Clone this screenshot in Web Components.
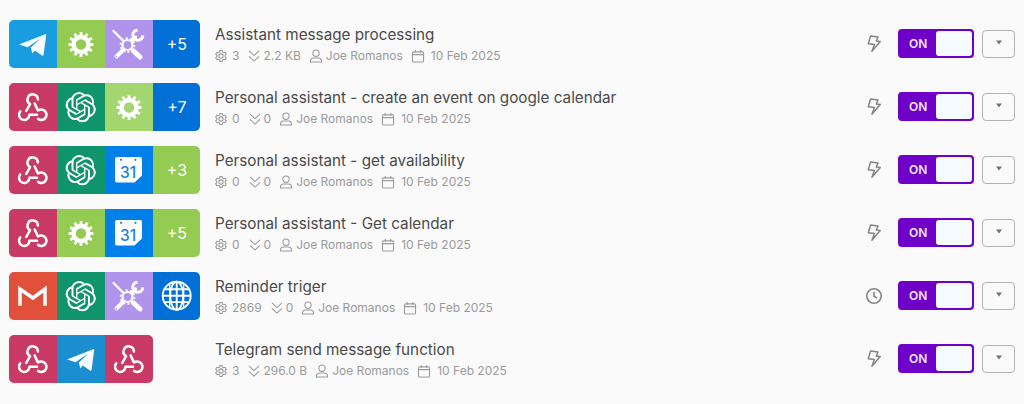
<!doctype html>
<html><head><meta charset="utf-8">
<style>
html,body{margin:0;padding:0;background:#fafafa}
body{font-family:Inter,"Liberation Sans",sans-serif}
</style></head><body>
<scenario-list>
<scenario-row name="Assistant message processing" ops="3" size="2.2 KB" trigger="bolt"><app-tile kind="telegram"></app-tile><app-tile kind="gear"></app-tile><app-tile kind="tools"></app-tile><app-tile kind="more" label="+5" bg="#006fd6"></app-tile></scenario-row>
<scenario-row name="Personal assistant - create an event on google calendar" ops="0" size="0" trigger="bolt"><app-tile kind="webhook"></app-tile><app-tile kind="openai"></app-tile><app-tile kind="gear" bg="#a3d66e"></app-tile><app-tile kind="more" label="+7" bg="#006fd6"></app-tile></scenario-row>
<scenario-row name="Personal assistant - get availability" ops="0" size="0" trigger="bolt"><app-tile kind="webhook"></app-tile><app-tile kind="openai"></app-tile><app-tile kind="gcal"></app-tile><app-tile kind="more" label="+3" bg="#94cb52"></app-tile></scenario-row>
<scenario-row name="Personal assistant - Get calendar" ops="0" size="0" trigger="bolt"><app-tile kind="webhook"></app-tile><app-tile kind="gear"></app-tile><app-tile kind="gcal"></app-tile><app-tile kind="more" label="+5" bg="#94cb52"></app-tile></scenario-row>
<scenario-row name="Reminder triger" ops="2869" size="0" trigger="clock"><app-tile kind="gmail"></app-tile><app-tile kind="openai"></app-tile><app-tile kind="tools"></app-tile><app-tile kind="globe"></app-tile></scenario-row>
<scenario-row name="Telegram send message function" ops="3" size="296.0 B" trigger="bolt"><app-tile kind="webhook"></app-tile><app-tile kind="telegram" bg="#1a8ecf"></app-tile><app-tile kind="webhook"></app-tile></scenario-row>
</scenario-list>
<script>
function gearPath(cx,cy,ro,ri,hole,teeth){
  let d='';const step=Math.PI*2/teeth;
  for(let i=0;i<teeth;i++){
    const a=i*step-Math.PI/2;
    const pts=[[ri,a-step*.5],[ri,a-step*.3],[ro,a-step*.2],[ro,a+step*.2],[ri,a+step*.3]];
    pts.forEach((p,j)=>{d+=(i===0&&j===0?'M':'L')+(cx+p[0]*Math.cos(p[1])).toFixed(2)+' '+(cy+p[0]*Math.sin(p[1])).toFixed(2)});
  }
  d+='Z M'+(cx+hole)+' '+cy+'a'+hole+' '+hole+' 0 1 0 '+(-2*hole)+' 0a'+hole+' '+hole+' 0 1 0 '+(2*hole)+' 0Z';
  return d;
}
const ICONS={
 telegram:{bg:'#1a9de0',svg:`<path fill="#f6fbff" d="M10 24.6 36.2 14.2q1.1-.3 1 1L34.6 34.8q-.3 1.4-1.6.7L25.8 30.6 23.4 33.4 21.8 27.6 31.4 18.6 18.6 27.2Z"/>`},
 gear:{bg:'#94cb52',svg:`<path fill="#fff" fill-rule="evenodd" d="${gearPath(24,24.5,12.6,9.6,5.2,12)}"/>`},
 tools:{bg:'#b094ec',svg:`<g fill="none" stroke="#fff" stroke-linecap="round">
   <path stroke-width="2.200" d="M8.5 11 18 20.5"/>
   <path stroke-width="5" d="M28.500 31 35 37"/>
   <path stroke-width="1.800" d="M26.500 30 29 32.500"/>
   <path stroke-width="4" d="M17.500 30.500 11.500 36.500"/>
   <path stroke-width="3.200" d="M27 20.500 30.500 17"/>
   <circle cx="22.5" cy="25" r="5" stroke-width="2.200"/>
   <circle cx="22.5" cy="25" r="7" stroke-width="1.600" stroke-dasharray="2.200 2.200" stroke-linecap="butt"/>
   <path stroke-width="3" stroke-linecap="butt" d="M32.500 10.200A5 5 0 1 0 37.800 15.400"/></g>
   <circle cx="11.2" cy="36.8" r=".9" fill="#b094ec"/>`},
 webhook:{bg:'#c93a67',svg:`<g fill="none" stroke="#fff" stroke-width="2.500" stroke-linecap="round" stroke-linejoin="round"><path d="M28.900 16.600A5.200 5.200 0 1 0 21.100 21.100L17.200 28"/><path d="M11.200 28.400A5.200 5.200 0 1 0 20.400 31.700H28"/><path d="M29 35.700A5.200 5.200 0 1 0 32.300 26.500Q30.400 26.500 28.900 27.400L25.700 20.500"/></g>`},
 openai:{bg:'#10946c',svg:`<g transform="translate(8.6 9) scale(1.26)"><path fill="#fff" d="M22.2819 9.8211a5.9847 5.9847 0 0 0-.5157-4.9108 6.0462 6.0462 0 0 0-6.5098-2.9A6.0651 6.0651 0 0 0 4.9807 4.1818a5.9847 5.9847 0 0 0-3.9977 2.9 6.0462 6.0462 0 0 0 .7427 7.0966 5.98 5.98 0 0 0 .511 4.9107 6.051 6.051 0 0 0 6.5146 2.9001A5.9847 5.9847 0 0 0 13.2599 24a6.0557 6.0557 0 0 0 5.7718-4.2058 5.9894 5.9894 0 0 0 3.9977-2.9001 6.0557 6.0557 0 0 0-.7475-7.0729zm-9.022 12.6081a4.4755 4.4755 0 0 1-2.8764-1.0408l.1419-.0804 4.7783-2.7582a.7948.7948 0 0 0 .3927-.6813v-6.7369l2.02 1.1686a.071.071 0 0 1 .038.052v5.5826a4.504 4.504 0 0 1-4.4945 4.4944zm-9.6607-4.1254a4.4708 4.4708 0 0 1-.5346-3.0137l.142.0852 4.783 2.7582a.7712.7712 0 0 0 .7806 0l5.8428-3.3685v2.3324a.0804.0804 0 0 1-.0332.0615L9.74 19.9502a4.4992 4.4992 0 0 1-6.1408-1.6464zM2.3408 7.8956a4.485 4.485 0 0 1 2.3655-1.9728V11.6a.7664.7664 0 0 0 .3879.6765l5.8144 3.3543-2.0201 1.1685a.0757.0757 0 0 1-.071 0l-4.8303-2.7865A4.504 4.504 0 0 1 2.3408 7.872zm16.5963 3.8558L13.1038 8.364 15.1192 7.2a.0757.0757 0 0 1 .071 0l4.8303 2.7913a4.4944 4.4944 0 0 1-.6765 8.1042v-5.6772a.79.79 0 0 0-.407-.667zm2.0107-3.0231l-.142-.0852-4.7735-2.7818a.7759.7759 0 0 0-.7854 0L9.409 9.2297V6.8974a.0662.0662 0 0 1 .0284-.0615l4.8303-2.7866a4.4992 4.4992 0 0 1 6.6802 4.66zM8.3065 12.863l-2.02-1.1638a.0804.0804 0 0 1-.038-.0567V6.0742a4.4992 4.4992 0 0 1 7.3757-3.4537l-.142.0805L8.704 5.459a.7948.7948 0 0 0-.3927.6813zm1.0976-2.3654l2.602-1.4998 2.6069 1.4998v2.9994l-2.5974 1.4997-2.6067-1.4997Z"/></g>`},
 gcal:{bg:'#0080e8',svg:`<path fill="#fff" d="M12 11h23q2 0 2 2v16.5L29.5 36.500H12q-2 0-2-2V13q0-2 2-2Z"/><circle cx="16" cy="13.8" r="1.1" fill="#0080e8"/><circle cx="30.5" cy="13.8" r="1.1" fill="#0080e8"/><text x="23.2" y="31.500" text-anchor="middle" font-family="Inter,'Liberation Sans',sans-serif" font-size="15.5" font-weight="500" fill="#1a80e0">31</text>`},
 gmail:{bg:'#e0503b',svg:`<path fill="none" stroke="#fff" stroke-width="3.500" stroke-linejoin="miter" d="M11 33.700V17L24 26 36 17V33.700"/>`},
 globe:{bg:'#006fd6',svg:`<g fill="none" stroke="#fff" stroke-width="1.9"><circle cx="23.700" cy="23.700" r="14"/><ellipse cx="23.700" cy="23.700" rx="6.500" ry="14"/><path d="M23.700 9.700V37.700M11.400 17.300H36M9.700 23.700H37.700M11.400 30.100H36"/><path d="M16.700 11.500V35.900M30.700 11.500V35.900" stroke-width="1.300"/></g>`}
};
class AppTile extends HTMLElement{
  connectedCallback(){
    const k=this.getAttribute('kind'),ic=ICONS[k],bg=this.getAttribute('bg')||(ic&&ic.bg);
    const s=this.attachShadow({mode:'open'});
    s.innerHTML=`<style>:host{display:flex;align-items:center;justify-content:center;flex:0 0 47.75px;height:48px;background:${bg};color:#fff;font:400 16px Inter,"Liberation Sans",sans-serif}svg{display:block;width:48px;height:48px;flex:none}</style>`+
      (k==='more'?`<span>${this.getAttribute('label')}</span>`:`<svg viewBox="0 0 48 48">${ic.svg}</svg>`);
  }
}
const META={
 cog:`<path d="M6.800 1.800h2.400l.4 1.700 1.200.7 1.700-.5 1.200 2-1.200 1.300v1.400l1.200 1.300-1.200 2-1.700-.5-1.200.7-.4 1.700H6.800l-.4-1.700-1.200-.7-1.700.5-1.200-2 1.200-1.300V7l-1.200-1.300 1.200-2 1.700.5 1.200-.7Z" transform="translate(0 .3)"/><circle cx="8" cy="8" r="2.300"/>`,
 chev:`<path d="M2.500 2.500 8 7.500l5.500-5M2.500 8.500 8 13.500l5.500-5"/>`,
 user:`<circle cx="8" cy="5" r="3.400"/><path d="M2 14.500v-.8a3.500 3.500 0 0 1 3.500-3.500h5a3.500 3.500 0 0 1 3.500 3.500v.8Z"/>`,
 cal:`<rect x="2" y="3.500" width="12" height="11" rx="1.200"/><path d="M2 6.500h12M5 1.500v3M11 1.500v3"/>`
};
class MetaItem extends HTMLElement{
  connectedCallback(){
    const s=this.attachShadow({mode:'open'});
    s.innerHTML=`<style>:host{display:inline-flex;align-items:center;gap:var(--g,4px)}svg{width:12px;height:12px;fill:none;stroke:#9b9b9b;stroke-width:1.150;display:block;flex:none;overflow:visible}</style><svg viewBox="1.500 1.500 13 13">${META[this.getAttribute('icon')]}</svg><slot></slot>`;
  }
}
customElements.define('meta-item',MetaItem);
class OnToggle extends HTMLElement{
  constructor(){super();const s=this.attachShadow({mode:'open'});
    s.innerHTML=`<style>:host{display:flex;box-sizing:border-box;width:76px;height:29px;background:#6f00c8;border:2px solid #6f00c8;border-radius:4px;color:#fff;font:600 12px Inter,"Liberation Sans",sans-serif}
    .l{flex:1;display:flex;align-items:center;padding-left:9px;color:#f0e6fa}.k{width:36px;background:#f6fbff;border-radius:3px}</style><div class="l">ON</div><div class="k"></div>`}
}
customElements.define('on-toggle',OnToggle);
class CaretButton extends HTMLElement{
  constructor(){super();const s=this.attachShadow({mode:'open'});
    s.innerHTML=`<style>:host{display:flex;align-items:center;justify-content:center;box-sizing:border-box;width:33px;height:28px;border:1.5px solid #b0b4b8;border-radius:4px;background:#fafafa}svg{width:8px;height:5px;display:block;margin-top:-2px}</style><svg viewBox="0 0 8 5"><path d="M1 .5h6L4 4.500Z" fill="#6b7676"/></svg>`}
}
customElements.define('caret-button',CaretButton);
class ScenarioRow extends HTMLElement{
  connectedCallback(){
    const a=n=>this.getAttribute(n);
    const bolt=`<svg width="16" height="18" viewBox="0 0 16 18" fill="none" stroke="#858585" stroke-width="1.500" stroke-linejoin="round"><path d="M3.500 1.500h7.500l-1.200 4.200h4L7 16.500l1.500-7H2.300Z" transform="rotate(8 8 9)"/></svg>`;
    const clock=`<svg width="18" height="18" viewBox="0 0 18 18" fill="none" stroke="#858585" stroke-width="1.600"><circle cx="9" cy="9" r="7.200"/><path d="M9 4.800V9.300L12 11"/></svg>`;
    const s=this.attachShadow({mode:'open'});
    s.innerHTML=`<style>
    :host{display:flex;align-items:center;height:48px;padding:0 9px}
    .slotbox{width:191px;flex:none;display:flex}
    .strip{display:flex;border-radius:5px;overflow:hidden}
    .info{flex:1;min-width:0;margin-left:15px;display:flex;flex-direction:column;gap:3px}
    .name{font:400 15.250px/20px Inter,"Liberation Sans",sans-serif;color:#4a4a4a}
    .meta{display:flex;align-items:center;font:400 12px/16px Inter,"Liberation Sans",sans-serif;color:#9b9b9b}
    .meta meta-item{margin-right:9px}
    .trig{width:18px;display:flex;justify-content:center;margin-right:15px}
    .ctl{display:flex;align-items:center;gap:8px;margin-top:-1px}
    </style><div class="slotbox"><div class="strip"><slot></slot></div></div>
    <div class="info"><div class="name">${a('name')}</div>
    <div class="meta"><meta-item icon="cog" style="--g:5px">${a('ops')}</meta-item><meta-item icon="chev" style="--g:3px">${a('size')}</meta-item><meta-item icon="user">Joe Romanos</meta-item><meta-item icon="cal" style="--g:7px">10 Feb 2025</meta-item></div></div>
    <div class="trig">${a('trigger')==='clock'?clock:bolt}</div>
    <div class="ctl"><on-toggle></on-toggle><caret-button></caret-button></div>`;
  }
}
class ScenarioList extends HTMLElement{
  constructor(){super();const s=this.attachShadow({mode:'open'});
    s.innerHTML=`<style>:host{display:flex;flex-direction:column;gap:15px;padding-top:20px;height:384px;width:1024px;box-sizing:content-box}</style><slot></slot>`}
}
customElements.define('app-tile',AppTile);
customElements.define('scenario-row',ScenarioRow);
customElements.define('scenario-list',ScenarioList);
</script>
</body></html>
